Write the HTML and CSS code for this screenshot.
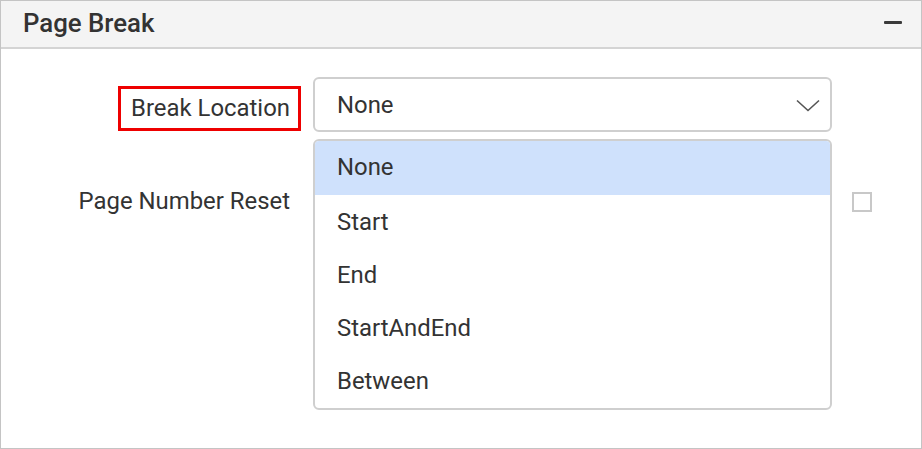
FILE: index.html
```html
<!DOCTYPE html>
<html>
<head>
<meta charset="utf-8">
<link rel="stylesheet" href="styles.css">
</head>
<body>
<div class="panel">
  <div class="panel-header">
    <span class="panel-title">Page Break</span>
    <span class="collapse-icon"></span>
  </div>
  <div class="panel-body">
    <div class="row row-location">
      <div class="label-cell">
        <span class="label highlighted">Break Location</span>
      </div>
      <div class="dropdown">
        <span class="dropdown-value">None</span>
        <svg class="chevron" width="24" height="13" viewBox="0 0 24 13"><polyline points="1,1.5 12,11.5 23,1.5" fill="none" stroke="#555" stroke-width="1.6"/></svg>
      </div>
    </div>
    <div class="row row-reset">
      <div class="label-cell">
        <span class="label">Page Number Reset</span>
      </div>
      <div class="control-spacer"></div>
      <span class="checkbox"></span>
    </div>
    <ul class="popup">
      <li class="item selected">None</li>
      <li class="item">Start</li>
      <li class="item">End</li>
      <li class="item">StartAndEnd</li>
      <li class="item">Between</li>
    </ul>
  </div>
</div>
</body>
</html>
```
FILE: styles.css
```css
* { box-sizing: border-box; }
html, body { margin: 0; padding: 0; background: #fff; }
body {
  font-family: Roboto, "Liberation Sans", Arial, sans-serif;
  color: #333;
}
.panel {
  width: 922px;
  height: 449px;
  border: 1px solid #c4c4c4;
  position: relative;
}
.panel-header {
  height: 48px;
  background: #f4f4f4;
  border-bottom: 2px solid #d4d4d4;
  display: flex;
  align-items: center;
  justify-content: space-between;
  padding: 0 19px 0 22px;
}
.panel-title {
  font-size: 25.8px;
  font-weight: 500;
  color: #333;
  padding-bottom: 2px;
}
.collapse-icon {
  width: 18px;
  height: 3px;
  background: #3a3a3a;
  border-radius: 1px;
  margin-top: -3px;
}
.panel-body {
  position: relative;
  padding-top: 28px;
}
.row {
  display: flex;
}
.label-cell {
  width: 300px;
  margin-right: 12px;
  display: flex;
  justify-content: flex-end;
}
.label {
  font-size: 23.9px;
  color: #333;
  padding: 0 8px 0 10px;
  border: 3px solid transparent;
  height: 45px;
  line-height: 39px;
  white-space: nowrap;
}
.label.highlighted {
  border-color: #ee0000;
}
.row-location .label-cell {
  padding-top: 9px;
}
.dropdown {
  width: 519px;
  height: 55px;
  border: 2px solid #cfcfcf;
  border-radius: 6px;
  display: flex;
  align-items: center;
  justify-content: space-between;
  padding: 0 10px 0 22px;
}
.dropdown-value {
  font-size: 23.9px;
  color: #333;
}
.chevron {
  display: block;
  margin-top: 2px;
}
.row-reset {
  margin-top: 46px;
  height: 45px;
  align-items: center;
}
.row-reset .label-cell {
  margin-top: 1px;
}
.control-spacer {
  width: 519px;
  margin-right: 20px;
}
.checkbox {
  width: 20px;
  height: 20px;
  border: 2px solid #c8c8c8;
  background: #fff;
  margin-top: 2px;
}
.popup {
  position: absolute;
  top: 90px;
  left: 312px;
  width: 519px;
  margin: 0;
  padding: 0;
  list-style: none;
  background: #fff;
  border: 2px solid #cfcfcf;
  border-radius: 6px;
  overflow: hidden;
}
.item {
  height: 53px;
  line-height: 53px;
  padding-left: 22px;
  font-size: 23.9px;
  color: #333;
}
.item.selected {
  height: 54px;
  line-height: 52px;
  margin-bottom: 1px;
  background: #cfe1fc;
}
```
